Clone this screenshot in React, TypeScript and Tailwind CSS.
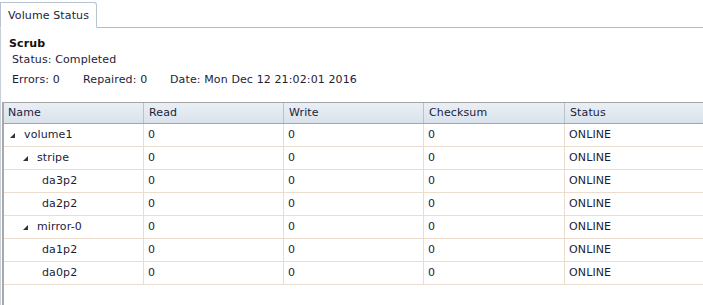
import React from 'react';

type Row = { name: string; level: number; expandable: boolean };

const rows: Row[] = [
  { name: 'volume1', level: 0, expandable: true },
  { name: 'stripe', level: 1, expandable: true },
  { name: 'da3p2', level: 2, expandable: false },
  { name: 'da2p2', level: 2, expandable: false },
  { name: 'mirror-0', level: 1, expandable: true },
  { name: 'da1p2', level: 2, expandable: false },
  { name: 'da0p2', level: 2, expandable: false },
];

const Arrow = () => (
  <svg width="5" height="5" viewBox="0 0 5 5" className="mr-[9px] shrink-0">
    <polygon points="5,0 5,5 0,5" fill="#333" />
  </svg>
);

const App = () => {
  return (
    <div
      className="w-[703px] h-[305px] bg-white text-[11px] tracking-[0.12px] text-[#1c1c3a] overflow-hidden flex flex-col"
      style={{ fontFamily: '"DejaVu Sans", Verdana, sans-serif' }}
    >
      {/* tab strip */}
      <div className="flex pt-[2px] border-b border-[#b4bccc] shrink-0">
        <div className="h-[26px] w-[97px] -mb-px border border-b-white border-[#b8c2d0] rounded-tr-[3px] bg-white pl-[7px] pt-[3px] flex items-center">
          Volume Status
        </div>
      </div>

      <div className="flex-1 flex flex-col border-l border-[#c8cfd8]">
        {/* scrub summary */}
        <div className="pl-[8px] pt-[9px] h-[74px] shrink-0">
          <div className="font-bold text-[#111] leading-[14px]">Scrub</div>
          <div className="pl-[3px] mt-[2px] leading-[14px]">Status: Completed</div>
          <div className="pl-[3px] mt-[6px] leading-[14px] flex">
            <span className="w-[71px]">Errors: 0</span>
            <span className="w-[87px]">Repaired: 0</span>
            <span>Date: Mon Dec 12 21:02:01 2016</span>
          </div>
        </div>

        {/* grid */}
        <div className="flex-1 ml-[1px] border-l-2 border-[#a8a8a8]">
          <div className="grid grid-cols-[140px_140px_140px_141px_1fr] h-[22px] border-y border-[#a5a5a5] bg-gradient-to-b from-[#eaeff5] to-[#d9e2ec]">
            {['Name', 'Read', 'Write', 'Checksum', 'Status'].map((h, i) => (
              <div
                key={h}
                className={`flex items-center ${i < 4 ? 'border-r border-[#b9c3ce]' : ''} ${i > 0 ? 'pl-[5px]' : 'pl-[4px]'}`}
              >
                {h}
              </div>
            ))}
          </div>
          {rows.map((r) => (
            <div
              key={r.name}
              className="grid grid-cols-[140px_140px_140px_141px_1fr] h-[23px] border-b border-[#ecdccd]"
            >
              <div
                className="flex items-center border-r border-[#ecdccd]"
                style={{ paddingLeft: r.expandable ? 6 + r.level * 13 : 38 }}
              >
                {r.expandable && <Arrow />}
                {r.name}
              </div>
              <div className="flex items-center pl-[4px] border-r border-[#ecdccd]">0</div>
              <div className="flex items-center pl-[4px] border-r border-[#ecdccd]">0</div>
              <div className="flex items-center pl-[4px] border-r border-[#ecdccd]">0</div>
              <div className="flex items-center pl-[4px]">ONLINE</div>
            </div>
          ))}
        </div>
      </div>
    </div>
  );
};

export default App;
